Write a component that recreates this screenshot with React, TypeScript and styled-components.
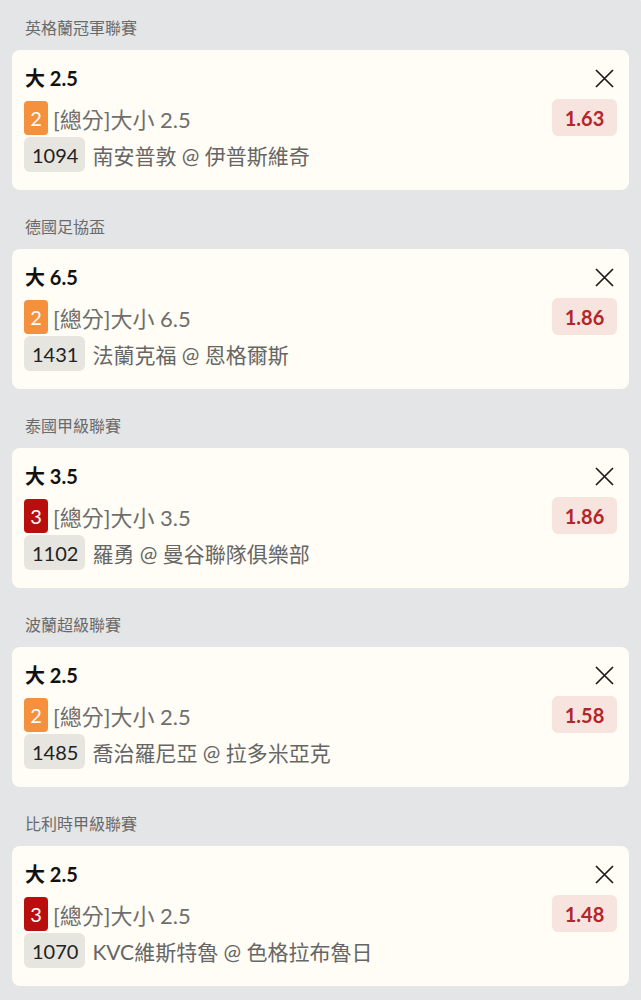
import styled, { createGlobalStyle } from "styled-components";

const GlobalStyle = createGlobalStyle`
  html, body {
    margin: 0;
    padding: 0;
    background: #ffffff;
  }
  body {
    font-family: Lato, "Noto Sans CJK TC", sans-serif;
    -webkit-font-smoothing: antialiased;
  }
`;

const Panel = styled.div`
  margin-top: -9px;
  background: #e4e5e7;
  border-radius: 12px 12px 0 0;
  padding: 0 12px 15px;
  min-height: 1009px;
  box-sizing: border-box;
`;

const LeagueTitle = styled.div`
  height: 20px;
  padding: 27px 13px 12px;
  font-size: 16px;
  line-height: 20px;
  color: #6a6a6a;
`;

const Card = styled.div`
  background: #fffdf5;
  border-radius: 8px;
  padding: 16px 12px 18px 12px;
  display: flex;
  flex-direction: column;
  box-sizing: border-box;
  height: 140px;
`;

const Row = styled.div<{ $gap?: number; $h: number }>`
  display: flex;
  align-items: center;
  justify-content: space-between;
  height: ${(p) => p.$h}px;
  flex: none;
  overflow: hidden;
  margin-top: ${(p) => p.$gap ?? 0}px;
`;

const Title = styled.div`
  font-size: 20px;
  line-height: 24px;
  font-weight: 700;
  color: #111;
  padding-left: 1px;
`;

const Market = styled.div`
  display: flex;
  align-items: center;
  gap: 5px;
  height: 37px;
  font-size: 22px;
  color: #6e6e6e;
`;

const Match = styled.div`
  display: flex;
  align-items: center;
  gap: 7px;
  height: 35px;
  font-size: 21px;
  color: #666;
`;

const Badge = styled.span<{ $level: number }>`
  display: inline-flex;
  align-items: center;
  justify-content: center;
  width: 24px;
  height: 34px;
  border-radius: 4px;
  color: #fff;
  font-size: 20px;
  background: ${(p) => (p.$level >= 3 ? "#b80e0e" : "#f5913c")};
`;

const Code = styled.span`
  display: inline-flex;
  align-items: center;
  justify-content: center;
  height: 35px;
  padding: 0 7px 0 8px;
  border-radius: 6px;
  background: #e7e5df;
  color: #222;
  font-size: 20px;
`;

const Odds = styled.div`
  display: flex;
  align-items: center;
  justify-content: center;
  width: 65px;
  height: 37px;
  border-radius: 6px;
  background: #f7e4de;
  color: #b3262a;
  font-size: 20px;
  font-weight: 700;
`;

const CloseButton = styled.div`
  display: flex;
  padding-right: 3px;
`;

const CloseIcon = () => (
  <svg width="19" height="19" viewBox="0 0 19 19">
    <path d="M1 1 L18 18 M18 1 L1 18" stroke="#1a1a1a" strokeWidth="1.7" fill="none" />
  </svg>
);

const bets = [
  { league: "英格蘭冠軍聯賽", pick: "大 2.5", level: 2, line: "2.5", odds: "1.63", code: "1094", match: "南安普敦 @ 伊普斯維奇" },
  { league: "德國足協盃", pick: "大 6.5", level: 2, line: "6.5", odds: "1.86", code: "1431", match: "法蘭克福 @ 恩格爾斯" },
  { league: "泰國甲級聯賽", pick: "大 3.5", level: 3, line: "3.5", odds: "1.86", code: "1102", match: "羅勇 @ 曼谷聯隊俱樂部" },
  { league: "波蘭超級聯賽", pick: "大 2.5", level: 2, line: "2.5", odds: "1.58", code: "1485", match: "喬治羅尼亞 @ 拉多米亞克" },
  { league: "比利時甲級聯賽", pick: "大 2.5", level: 3, line: "2.5", odds: "1.48", code: "1070", match: "KVC維斯特魯 @ 色格拉布魯日" },
];

const App = () => {
  return (
    <>
      <GlobalStyle />
      <Panel>
        {bets.map((b) => (
          <div key={b.code}>
            <LeagueTitle>{b.league}</LeagueTitle>
            <Card>
              <Row $h={24}>
                <Title>{b.pick}</Title>
                <CloseButton>
                  <CloseIcon />
                </CloseButton>
              </Row>
              <Row $h={37} $gap={9}>
                <Market>
                  <Badge $level={b.level}>{b.level}</Badge>
                  <span>[總分]大小 {b.line}</span>
                </Market>
                <Odds>{b.odds}</Odds>
              </Row>
              <Row $h={35} $gap={1}>
                <Match>
                  <Code>{b.code}</Code>
                  <span>{b.match}</span>
                </Match>
              </Row>
            </Card>
          </div>
        ))}
      </Panel>
    </>
  );
};

export default App;
